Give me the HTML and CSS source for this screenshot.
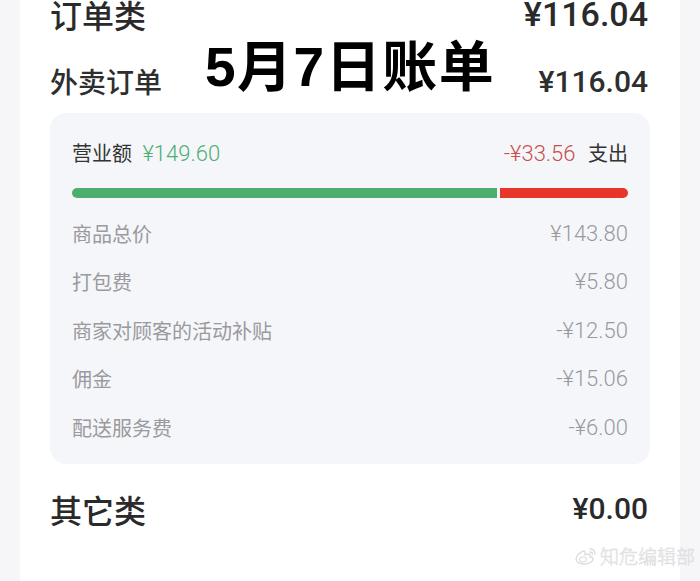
FILE: index.html
```html
<!DOCTYPE html>
<html lang="zh-CN">
<head>
    <meta charset="UTF-8">
    <title>5月7日账单</title>
    <link rel="stylesheet" href="styles.css">
</head>
<body>
    <div class="page">
        <!-- Riepilogo ordini -->
        <div class="row section">
            <span>订单类</span>
            <span class="num">¥116.04</span>
        </div>
        <div class="row sub">
            <span>外卖订单</span>
            <span class="num">¥116.04</span>
        </div>

        <div class="detail">
            <div class="head">
                <div>营业额 <span class="income num">¥149.60</span></div>
                <div><span class="expense num">-¥33.56</span> 支出</div>
            </div>
            <div class="bar">
                <div class="bar-in" style="width: 76.5%"></div>
                <div class="bar-out"></div>
            </div>
            <div class="item"><span>商品总价</span><span class="num">¥143.80</span></div>
            <div class="item"><span>打包费</span><span class="num">¥5.80</span></div>
            <div class="item"><span>商家对顾客的活动补贴</span><span class="num">-¥12.50</span></div>
            <div class="item"><span>佣金</span><span class="num">-¥15.06</span></div>
            <div class="item"><span>配送服务费</span><span class="num">-¥6.00</span></div>
        </div>

        <div class="row section other">
            <span>其它类</span>
            <span class="num">¥0.00</span>
        </div>

        <h1 class="title">5月7日账单</h1>

        <div class="mark">
            <svg width="22" height="18" viewBox="0 0 22 18">
                <path d="M9 4c-4 1-8 5-8 8 0 3 4 5 8 5s9-2 9-5c0-2-2-2-3-2 1-2 0-3-2-3-1 0-3 1-3 1 0-2 0-4-1-4z" fill="none" stroke="#dcdce0" stroke-width="1.3"/>
                <ellipse cx="8" cy="12.5" rx="3.5" ry="2.5" fill="none" stroke="#dcdce0" stroke-width="1.1"/>
                <path d="M15 2c3 0 5 2 5 5M15 5c1.5 0 2.5 1 2.5 2.5" fill="none" stroke="#dcdce0" stroke-width="1.3" stroke-linecap="round"/>
            </svg>
            <span>知危编辑部</span>
        </div>
    </div>
</body>
</html>
```

FILE: styles.css
```css
body {
    margin: 0;
    background-color: #f6f6f8;
    font-family: "Noto Sans CJK SC", sans-serif;
    color: #222;
    overflow: hidden;
}
.page {
    position: relative;
    width: 598px;
    height: 620px;
    margin: 0 20px;
    padding: 0 32px 0 30px;
    background-color: #ffffff;
}
.num {
    font-family: Roboto, "Noto Sans CJK SC", sans-serif;
}
.row {
    display: flex;
    justify-content: space-between;
    align-items: center;
    height: 50px;
}
.section {
    margin-top: -11px;
    font-size: 32px;
    font-weight: 500;
    color: #2a2a2a;
}
.section .num {
    font-size: 34px;
}
.sub {
    margin-top: 17px;
    font-size: 28px;
    font-weight: 500;
    color: #2e2e2e;
}
.sub .num {
    font-size: 30px;
}
.other {
    margin-top: 20px;
}
.other .num {
    font-size: 30px;
}
.detail {
    margin: 7px -2px 0 0;
    padding: 15px 22px 12px;
    background-color: #f5f6f9;
    border-radius: 16px;
}
.head {
    display: flex;
    justify-content: space-between;
    align-items: center;
    height: 48px;
    font-size: 20px;
    color: #333;
}
.head .num {
    font-size: 22px;
    font-weight: 300;
}
.income {
    margin-left: 6px;
    color: #4fae74;
}
.expense {
    margin-right: 8px;
    color: #c9504a;
}
.bar {
    display: flex;
    gap: 3px;
    height: 10px;
    margin-top: 12px;
    margin-bottom: 11px;
    border-radius: 5px;
    overflow: hidden;
}
.bar-in {
    background-color: #4caf6e;
}
.bar-out {
    flex: 1;
    background-color: #e8352a;
}
.item {
    display: flex;
    justify-content: space-between;
    align-items: center;
    height: 48.5px;
    font-size: 20px;
    color: #9a9a9e;
}
.item .num {
    font-size: 22px;
    font-weight: 300;
}
.title {
    position: absolute;
    top: 33px;
    left: 185px;
    margin: 0;
    font-family: "Liberation Sans", "Noto Sans CJK SC", sans-serif;
    font-size: 55px;
    font-weight: bold;
    color: #000;
    letter-spacing: 1.5px;
}
.mark {
    position: absolute;
    left: 555px;
    top: 553px;
    display: flex;
    align-items: center;
    gap: 3px;
    font-size: 19px;
    font-weight: 300;
    color: transparent;
    -webkit-text-stroke: 0.6px #dcdce0;
    white-space: nowrap;
}
```
